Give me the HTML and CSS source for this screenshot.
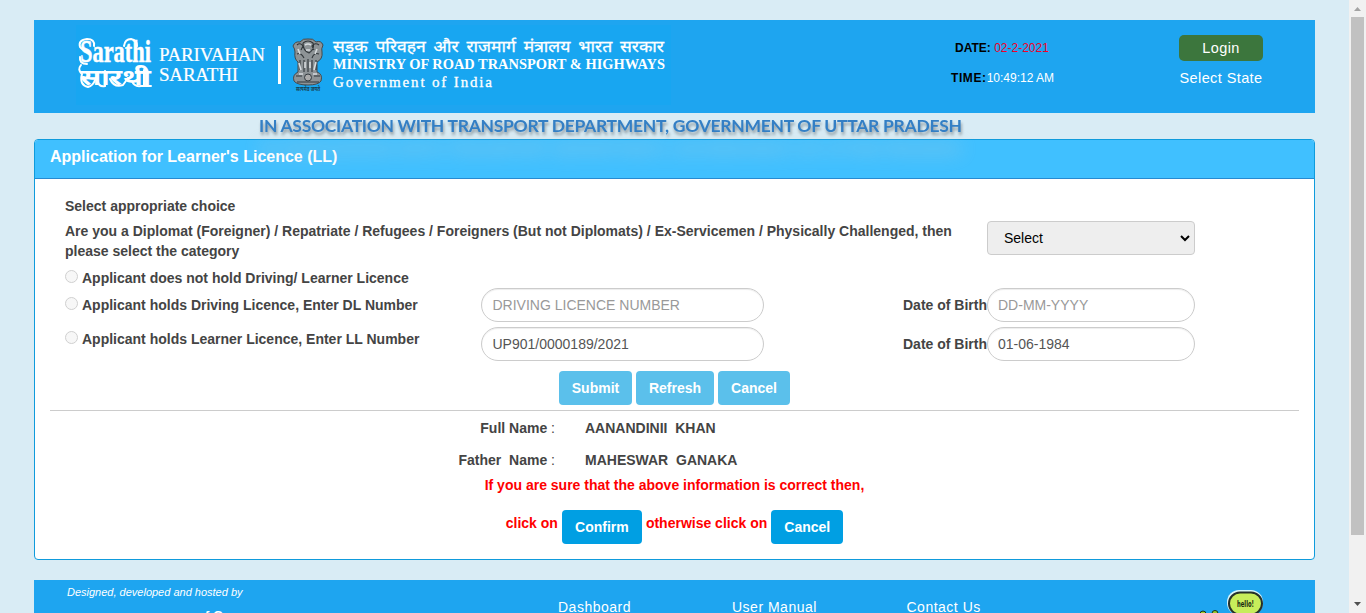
FILE: index.html
```html
<!DOCTYPE html>
<html lang="en">
<head>
<meta charset="utf-8">
<title>Parivahan Sarathi</title>
<link rel="stylesheet" href="styles.css">
</head>
<body>
<main class="page">
  <header class="header">
    <svg class="brand" width="640" height="93" viewBox="34 20 640 93">
      <rect class="brand-bg" x="76" y="25" width="595" height="80"/>
      <g class="wordmark">
        <text class="script" x="80" y="62" textLength="71" lengthAdjust="spacingAndGlyphs">Sarathi</text>
        <text class="script-hi" x="80" y="84.500" textLength="71" lengthAdjust="spacingAndGlyphs">सारथी</text>
        <path class="swash" d="M94 46Q95 39 87 39Q78 40 80 47Q82 50 87 51M80 57Q79 64 87 64M124 46Q125 39 131 39Q137 40 137 46M81 65Q77 70 82 74Q79 85 88 87Q93 86 95 80M98 82Q99 87 105 86V71M110 79Q114 88 123 85L128 78M132 81Q134 87 141 86H151M144 70V86"/>
      </g>
      <text class="name" x="159" y="60.500" textLength="106">PARIVAHAN</text>
      <text class="name" x="159" y="81" textLength="79">SARATHI</text>
      <rect x="278" y="46" width="3" height="38" fill="#fff"/>
      <g class="emblem">
        <path class="stone" d="M300 42Q303 38 308 39Q313 38 316 42Q321 40 323 45Q321 49 322 52Q323 59 317 62L317 72Q323 74 321 81Q318 85 308 85Q297 85 294 81Q292 75 298 72V62Q294 59 295 52Q295 49 293 46Q295 41 300 42Z"/>
        <path class="carve" d="M297 45Q300 42 303 46L301 50M319 45Q315 42 312 46L314 50M303 43Q308 39 313 43Q315 49 309 53Q303 51 303 43M297 54Q301 52 304 58M319 54Q314 52 312 58M300 60V70M304 60V72M308 59V72M312 60V72M316 60V70M296 76H302M314 76H320M297 82H319"/>
        <path class="light" d="M305 45Q308 43 311 45M306 50H310M298 49L300 54M317 49L315 54M299 63L301 70M305 62V68M310 62V68M316 62L314 70M299 74H303M313 74H317"/>
        <circle cx="308" cy="77.500" r="3.500"/>
        <text class="motto" x="296" y="91" textLength="24" lengthAdjust="spacingAndGlyphs">सत्यमेव जयते</text>
      </g>
      <text class="ministry-hi" x="333" y="52" textLength="331" lengthAdjust="spacingAndGlyphs">सड़क परिवहन और राजमार्ग मंत्रालय भारत सरकार</text>
      <text class="ministry" x="333" y="69" textLength="332" lengthAdjust="spacingAndGlyphs">MINISTRY OF ROAD TRANSPORT &amp; HIGHWAYS</text>
      <text class="govt" x="333" y="87" textLength="159">Government of India</text>
    </svg>
    <div class="clock">
      <div><b>DATE:</b> <span class="date">02-2-2021</span></div>
      <div class="time"><b>TIME:</b><span>10:49:12 AM</span></div>
    </div>
    <nav class="account"><a class="login">Login</a><a>Select State</a></nav>
  </header>

  <h1 class="association"><svg width="705" height="26"><text x="0" y="19" textLength="703">IN ASSOCIATION WITH TRANSPORT DEPARTMENT, GOVERNMENT OF UTTAR PRADESH</text></svg></h1>

  <section class="panel">
    <h2 class="panel-heading">Application for Learner's Licence (LL)</h2>
    <div class="panel-body">
      <p class="intro">Select appropriate choice</p>
      <div class="category">
        <p>Are you a Diplomat (Foreigner) / Repatriate / Refugees / Foreigners (But not Diplomats) / Ex-Servicemen / Physically Challenged, then<br>please select the category</p>
        <div class="select"><span>Select</span><svg width="10" height="7" viewBox="0 0 10 7"><path d="M1 1L5 5L9 1"/></svg></div>
      </div>
      <label class="choice none"><i class="radio"></i>Applicant does not hold Driving/ Learner Licence</label>
      <div class="fields">
        <label class="choice"><i class="radio"></i>Applicant holds Driving Licence, Enter DL Number</label>
        <input class="field" placeholder="DRIVING LICENCE NUMBER">
        <span class="dob">Date of Birth</span>
        <input class="field short" placeholder="DD-MM-YYYY">
        <label class="choice"><i class="radio"></i>Applicant holds Learner Licence, Enter LL Number</label>
        <input class="field" value="UP901/0000189/2021">
        <span class="dob">Date of Birth</span>
        <input class="field short" value="01-06-1984">
      </div>
      <div class="actions"><button class="btn w73">Submit</button><button class="btn w78">Refresh</button><button class="btn w72">Cancel</button></div>
      <hr>
      <dl class="person">
        <dt>Full Name <span>:</span></dt><dd>AANANDINII&nbsp; KHAN</dd>
        <dt>Father&nbsp; Name <span>:</span></dt><dd>MAHESWAR&nbsp; GANAKA</dd>
      </dl>
      <p class="warning">If you are sure that the above information is correct then,</p>
      <div class="confirm"><span>click on</span><button class="btn dark w80">Confirm</button><span>otherwise click on</span><button class="btn dark w72">Cancel</button></div>
    </div>
  </section>

  <footer class="footer">
    <div class="credit"><em>Designed, developed and hosted by</em><span class="credit-mark">f G</span></div>
    <nav class="links"><a>Dashboard</a><a>User Manual</a><a>Contact Us</a></nav>
    <svg class="chat" width="70" height="33" viewBox="0 0 70 33">
      <rect x="29" y="10" width="36" height="25" rx="12" fill="#d5f4fb"/>
      <rect x="31" y="12.500" width="33" height="22" rx="11" fill="#c7ed5b" stroke="#26302b" stroke-width="2"/>
      <text x="39" y="26.500" textLength="17" lengthAdjust="spacingAndGlyphs">hello!</text>
      <circle cx="5" cy="34" r="3" fill="#9dc929" stroke="#17351e"/>
      <circle cx="17" cy="33.500" r="3" fill="#9dc929" stroke="#17351e"/>
    </svg>
  </footer>
</main>
<aside class="scrollbar">
  <svg width="17" height="17"><path d="M5 11L8.500 7L12 11Z" fill="#a3a3a3"/></svg>
  <div class="thumb"></div>
  <svg class="down" width="17" height="17"><path d="M5 6H12L8.500 10Z" fill="#505050"/></svg>
</aside>
</body>
</html>
```

FILE: styles.css
```css
* { box-sizing: border-box; }
body { margin: 0; height: 613px; overflow: hidden; display: flex; background: #d9ecf5; font-family: "Liberation Sans", Arial, sans-serif; font-size: 14px; line-height: 20px; color: #444; }
p, h1, h2, dl, dd { margin: 0; }
.page { flex: 1; min-width: 0; height: 613px; overflow: hidden; padding: 20px 34px 0; }
.header { height: 93px; background: #1ea5f0; display: flex; }
.brand { flex: none; }
.brand-bg { fill: #18a6f1; }
.brand text { fill: #fff; }
.script { font: bold 31px "Liberation Serif", serif; stroke: #fff; stroke-width: .500; }
.script-hi { font: bold 23px "Noto Sans Devanagari", "Noto Sans", sans-serif; }
.swash { fill: none; stroke: #fff; stroke-width: 2; stroke-linecap: round; }
.name { font: 19px "Liberation Serif", serif; stroke: #fff; stroke-width: .200; }
.ministry-hi { font: 16px "Noto Sans Devanagari", "Noto Sans", sans-serif; word-spacing: 3px; stroke: #fff; stroke-width: .300; }
.ministry { font: bold 14px "Liberation Serif", serif; }
.govt { font: 15px "Liberation Serif", serif; stroke: #fff; stroke-width: .300; }
.stone { fill: #8d9396; stroke: #45494b; stroke-width: 1; }
.carve { fill: none; stroke: #30363a; stroke-width: 1.100; }
.light { fill: none; stroke: #d7dcdf; stroke-width: 1.600; }
.emblem circle { fill: #aaa; stroke: #343b40; }
.brand .motto { fill: #17404f; font: bold 6px "Noto Sans Devanagari", "Noto Sans", sans-serif; }
.clock { width: 147px; margin-left: 274px; padding-top: 18px; font-size: 12px; color: #fff; }
.clock div { height: 30px; padding-left: 7px; white-space: nowrap; }
.clock .time { padding-left: 3px; }
.clock b { color: #000; }
.clock .time b { letter-spacing: .600px; }
.date { color: #f00028; }
.account { width: 84px; margin-left: 84px; padding-top: 15px; display: flex; flex-direction: column; align-items: center; gap: 7px; color: #fff; font-size: 14.500px; letter-spacing: .400px; white-space: nowrap; }
.account .login { width: 84px; height: 26px; line-height: 26px; text-align: center; background: #3c763d; border-radius: 5px; }
.association { position: relative; height: 26px; padding-left: 225px; line-height: 0; z-index: 1; pointer-events: none; }
.association svg { overflow: visible; filter: drop-shadow(1px 3px 1.500px rgba(0,0,0,.35)) drop-shadow(0 22px 9px rgba(200,205,205,.45)); }
.association text { font: bold 17.500px Lato, sans-serif; fill: #337fc5; }
.panel { height: 421px; border: 1px solid #0f9bdc; border-radius: 4px; background: #fff; overflow: hidden; }
.panel-heading { height: 39px; padding-left: 15px; border-bottom: 1px solid #278ad1; background: #40c0ff; color: #fff; font-size: 16px; line-height: 33px; }
.panel-body { padding: 17px 15px 0; font-weight: bold; }
.intro { padding-left: 15px; height: 25px; }
.category { display: grid; grid-template-columns: 922px 208px; padding-left: 15px; height: 47px; white-space: nowrap; }
.select { height: 34px; border: 1px solid #ccc; border-radius: 4px; background: #eee; color: #000; font-weight: normal; display: flex; justify-content: space-between; align-items: center; padding: 0 4px 0 16px; }
.select svg { fill: none; stroke: #000; stroke-width: 2; }
.choice { display: flex; gap: 4px; white-space: nowrap; }
.none { padding-left: 15px; height: 20px; }
.radio { flex: none; width: 13px; height: 13px; border: 1px solid #d0d0d0; border-radius: 50%; background: #f7f7f7; margin-top: 2px; }
.fields { padding-left: 15px; display: grid; grid-template-columns: 416px 283px 223px 208px; row-gap: 5px; grid-auto-rows: 34px; }
.fields .choice { padding-top: 7px; }
.fields .choice:nth-of-type(2) { padding-top: 2px; }
.field { width: 283px; height: 34px; border: 1px solid #ccc; border-radius: 17px; padding: 0 10.500px; background: #fff; color: #555; font: 14px "Liberation Sans", Arial, sans-serif; box-shadow: inset 0 1px 1px rgba(0,0,0,.075); }
.field.short { width: 208px; padding: 0 10px; }
.field::placeholder { color: #999; }
.dob { text-align: right; line-height: 34px; }
.actions { display: flex; justify-content: center; gap: 4px; margin-top: 10px; }
.btn { height: 34px; border: 0; border-radius: 4px; padding: 0; background: #5bc0eb; color: #fff; font: bold 14px "Liberation Sans", Arial, sans-serif; }
.w73 { width: 73px; } .w78 { width: 78px; } .w72 { width: 72px; } .w80 { width: 80px; }
.btn.dark { background: #009fe3; }
hr { margin: 5px 0 0; border: 0; height: 1px; background: #ccc; }
.person { height: 64px; padding-top: 7px; display: grid; grid-template-columns: 505px 1fr; column-gap: 30px; grid-auto-rows: 32px; }
.person dt { text-align: right; }
.person dt span { font-weight: normal; }
.warning { color: #f00; text-align: center; }
.confirm { display: flex; justify-content: center; gap: 4px; margin-top: 15px; color: #f00; }
.confirm span { line-height: 26px; }
.footer { margin-top: 20px; height: 33px; overflow: hidden; background: #1ea5f0; display: flex; color: #fff; }
.credit { width: 524px; padding: 2px 0 0 33px; font-size: 11px; display: flex; flex-direction: column; }
.credit-mark { padding: 4px 0 0 138px; font-weight: bold; font-size: 13px; line-height: 20px; }
.links { display: grid; grid-template-columns: 174px 174.500px 291px; padding-top: 17px; letter-spacing: .500px; }
.chat text { fill: #152711; font: bold 8px "DejaVu Sans", sans-serif; }
.scrollbar { width: 17px; height: 613px; background: #f1f1f1; display: flex; flex-direction: column; }
.scrollbar svg { flex: none; }
.thumb { width: 13px; height: 518px; background: #c1c1c1; margin: 0 2px; }
.down { margin-top: auto; }
```
